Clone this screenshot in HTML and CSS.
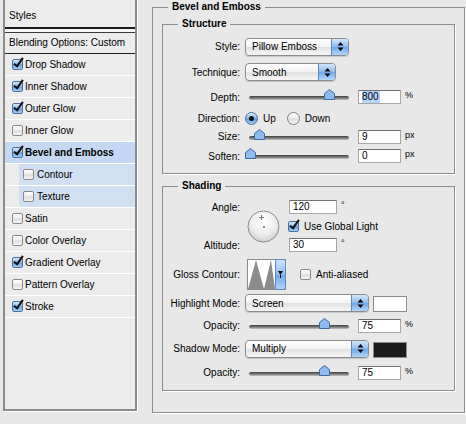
FILE: index.html
```html
<!DOCTYPE html>
<html lang="en">
<head>
    <meta charset="UTF-8">
    <title>Layer Style</title>
    <link rel="stylesheet" href="styles.css">
</head>
<body>
<div class="dialog">
    <div class="styles-list">
        <div class="list-head">Styles</div>
        <div class="list-blend">Blending Options: Custom</div>
        <div class="list-item"><span class="cb on"></span>Drop Shadow</div>
        <div class="list-item"><span class="cb on"></span>Inner Shadow</div>
        <div class="list-item"><span class="cb on"></span>Outer Glow</div>
        <div class="list-item"><span class="cb"></span>Inner Glow</div>
        <div class="list-item selected"><span class="cb on"></span><b>Bevel and Emboss</b></div>
        <div class="list-item sub"><span class="cb"></span>Contour</div>
        <div class="list-item sub"><span class="cb"></span>Texture</div>
        <div class="list-item"><span class="cb"></span>Satin</div>
        <div class="list-item"><span class="cb"></span>Color Overlay</div>
        <div class="list-item"><span class="cb on"></span>Gradient Overlay</div>
        <div class="list-item"><span class="cb"></span>Pattern Overlay</div>
        <div class="list-item"><span class="cb on"></span>Stroke</div>
    </div>

    <fieldset class="group outer">
        <legend>Bevel and Emboss</legend>

        <fieldset class="group inner structure">
            <legend>Structure</legend>
            <div class="form-grid structure-grid">
                <span class="label">Style:</span>
                <div class="control">
                    <div class="popup popup-style">
                        <span class="popup-text">Pillow Emboss</span>
                        <span class="popup-arrows"><svg width="7" height="11" viewBox="0 0 7 11"><path d="M3.5 1L6.5 4.5H0.5Z M0.5 6.5H6.5L3.5 10Z"/></svg></span>
                    </div>
                </div>

                <span class="label">Technique:</span>
                <div class="control">
                    <div class="popup popup-technique">
                        <span class="popup-text">Smooth</span>
                        <span class="popup-arrows"><svg width="7" height="11" viewBox="0 0 7 11"><path d="M3.5 1L6.5 4.5H0.5Z M0.5 6.5H6.5L3.5 10Z"/></svg></span>
                    </div>
                </div>

                <span class="label">Depth:</span>
                <div class="control">
                    <div class="slider"><svg class="thumb" style="left: 75px" width="11" height="11" viewBox="0 0 11 11"><path d="M5.5 0.5L10.5 4.5V10.5H0.5V4.5Z"/></svg></div>
                    <span class="field"><span class="field-sel">800</span></span>
                    <span class="unit">%</span>
                </div>

                <span class="label">Direction:</span>
                <div class="control">
                    <span class="radio on"></span><span class="radio-text">Up</span>
                    <span class="radio radio-down"></span><span class="radio-text">Down</span>
                </div>

                <span class="label">Size:</span>
                <div class="control">
                    <div class="slider"><svg class="thumb" style="left: 5px" width="11" height="11" viewBox="0 0 11 11"><path d="M5.5 0.5L10.5 4.5V10.5H0.5V4.5Z"/></svg></div>
                    <span class="field">9</span>
                    <span class="unit">px</span>
                </div>

                <span class="label">Soften:</span>
                <div class="control">
                    <div class="slider"><svg class="thumb" style="left: -4px" width="11" height="11" viewBox="0 0 11 11"><path d="M5.5 0.5L10.5 4.5V10.5H0.5V4.5Z"/></svg></div>
                    <span class="field">0</span>
                    <span class="unit">px</span>
                </div>
            </div>
        </fieldset>

        <fieldset class="group inner shading">
            <legend>Shading</legend>
            <div class="form-grid shading-grid">
                <span class="label">Angle:</span>
                <div class="light">
                    <svg class="dial" width="33" height="33" viewBox="0 0 33 33">
                        <defs>
                            <radialGradient id="dialFill" cx="0.5" cy="0.35" r="0.65">
                                <stop offset="0" stop-color="#ffffff"/>
                                <stop offset="0.6" stop-color="#eeeeee"/>
                                <stop offset="1" stop-color="#cfcfcf"/>
                            </radialGradient>
                        </defs>
                        <circle cx="16.5" cy="16.5" r="15.5" fill="url(#dialFill)" stroke="#8a8a8a"/>
                        <path d="M12 7.5H17 M14.5 5V10" stroke="#777" stroke-width="1"/>
                        <rect x="16" y="16" width="2" height="2" fill="#8a8a8a"/>
                    </svg>
                    <div class="light-fields">
                        <div class="light-row"><span class="field field-wide">120</span><span class="unit">°</span></div>
                        <div class="light-row"><span class="cb on"></span><span class="cb-text">Use Global Light</span></div>
                        <div class="light-row"><span class="field field-wide">30</span><span class="unit">°</span></div>
                    </div>
                </div>
                <span></span>
                <span class="label">Altitude:</span>

                <span class="label">Gloss Contour:</span>
                <div class="control">
                    <svg class="contour" width="39" height="31" viewBox="0 0 39 31">
                        <defs>
                            <linearGradient id="contourBlue" x1="0" y1="0" x2="0" y2="1">
                                <stop offset="0" stop-color="#d2e6fb"/>
                                <stop offset="0.5" stop-color="#8fbdf0"/>
                                <stop offset="0.51" stop-color="#6ea9ea"/>
                                <stop offset="1" stop-color="#b3d6fb"/>
                            </linearGradient>
                        </defs>
                        <rect x="0.5" y="0.5" width="38" height="30" fill="#fff" stroke="#8a8a8a"/>
                        <path d="M1 30L9 1L17 30L24 1L28 30Z" fill="#8c8c8c"/>
                        <rect x="28.5" y="0.5" width="10" height="30" rx="2" fill="url(#contourBlue)" stroke="#5f86c0"/>
                        <path d="M31 12H36L33.5 16Z M33 16H34V19H33Z" fill="#000"/>
                    </svg>
                    <span class="cb cb-anti"></span><span class="cb-text">Anti-aliased</span>
                </div>

                <span class="label">Highlight Mode:</span>
                <div class="control">
                    <div class="popup popup-mode">
                        <span class="popup-text">Screen</span>
                        <span class="popup-arrows"><svg width="7" height="11" viewBox="0 0 7 11"><path d="M3.5 1L6.5 4.5H0.5Z M0.5 6.5H6.5L3.5 10Z"/></svg></span>
                    </div>
                    <span class="swatch"></span>
                </div>

                <span class="label">Opacity:</span>
                <div class="control">
                    <div class="slider"><svg class="thumb" style="left: 70px" width="11" height="11" viewBox="0 0 11 11"><path d="M5.5 0.5L10.5 4.5V10.5H0.5V4.5Z"/></svg></div>
                    <span class="field">75</span>
                    <span class="unit">%</span>
                </div>

                <span class="label">Shadow Mode:</span>
                <div class="control">
                    <div class="popup popup-mode">
                        <span class="popup-text">Multiply</span>
                        <span class="popup-arrows"><svg width="7" height="11" viewBox="0 0 7 11"><path d="M3.5 1L6.5 4.5H0.5Z M0.5 6.5H6.5L3.5 10Z"/></svg></span>
                    </div>
                    <span class="swatch swatch-dark"></span>
                </div>

                <span class="label">Opacity:</span>
                <div class="control">
                    <div class="slider"><svg class="thumb" style="left: 70px" width="11" height="11" viewBox="0 0 11 11"><path d="M5.5 0.5L10.5 4.5V10.5H0.5V4.5Z"/></svg></div>
                    <span class="field">75</span>
                    <span class="unit">%</span>
                </div>
            </div>
        </fieldset>
    </fieldset>
</div>
</body>
</html>
```

FILE: styles.css
```css
body {
    margin: 0;
    background-color: #e8e8e8;
    font-family: "Liberation Sans", Arial, sans-serif;
    font-size: 10px;
    color: #000;
    overflow: hidden;
}
.dialog {
    display: flex;
    align-items: flex-start;
    width: 466px;
    height: 424px;
    overflow: hidden;
}

/* styles list on the left */
.styles-list {
    flex: none;
    width: 130px;
    height: 409px;
    margin-left: 3px;
    background-color: #ececec;
    border: 2px solid #8c8c8c;
    border-top: none;
    box-shadow: 1px 1px 0 #fff;
}
.list-head {
    height: 22px;
    padding: 5px 0 0 4px;
    line-height: 22px;
    border-bottom: 2px solid #1c1c1c;
    box-shadow: 0 3px 0 #f7f7f7;
}
.list-blend {
    margin-top: 3px;
    height: 20px;
    padding-left: 4px;
    line-height: 20px;
    border-top: 1px solid #3a3a3a;
    border-bottom: 1px solid #222;
}
.list-item {
    display: flex;
    align-items: center;
    height: 21px;
    padding-left: 7px;
    border-bottom: 1px solid #fff;
}
.list-item .cb {
    margin-right: 2px;
}
.list-item.selected {
    background-color: #c4d8f3;
}
.list-item.sub {
    padding-left: 18px;
    background: linear-gradient(to right, #ececec 14px, #d1dff3 14px);
}
.list-item.sub .cb {
    margin-right: 3px;
}

/* group boxes */
.group {
    box-sizing: border-box;
    margin: 0;
    padding: 0;
    min-width: 0;
    border: 1px solid #8e8e8e;
    box-shadow: 1px 1px 0 #fff;
}
.group legend {
    padding: 0 4px;
    line-height: 12px;
    font-weight: bold;
}
.outer {
    flex: none;
    width: 313px;
    margin: 1px 0 0 15px;
    padding-bottom: 21px;
}
.outer > legend {
    margin-left: 15px;
}
.inner {
    width: 293px;
    margin-left: 9px;
}
.inner > legend {
    margin-left: 15px;
}
.structure {
    margin-top: 5px;
    padding: 4px 0 7px;
}
.shading {
    margin-top: 6px;
    padding: 4px 0 5px;
}

.form-grid {
    display: grid;
    grid-template-columns: 77px 1fr;
    column-gap: 5px;
    align-items: center;
}
.structure-grid {
    grid-template-rows: 25px 26px 24px 18px 19px 20px;
}
.shading-grid {
    grid-template-rows: 22px 16px 22px 36px 22px 23px 23px 25px;
}
.label {
    text-align: right;
    white-space: nowrap;
}
.control {
    display: flex;
    align-items: center;
}

/* popup buttons */
.popup {
    box-sizing: border-box;
    display: flex;
    align-items: center;
    height: 18px;
    border: 1px solid #8b8b8b;
    border-radius: 4px;
    background: linear-gradient(#ffffff, #f3f3f3 48%, #e2e2e2 52%, #f6f6f6);
    box-shadow: 0 1px 1px rgba(0, 0, 0, 0.15);
    overflow: hidden;
}
.popup-style {
    width: 104px;
}
.popup-technique {
    width: 91px;
}
.popup-mode {
    width: 124px;
}
.popup-text {
    flex: 1;
    padding-left: 6px;
}
.popup-arrows {
    display: flex;
    align-items: center;
    justify-content: center;
    align-self: stretch;
    width: 16px;
    border-left: 1px solid #5f86c0;
    background: linear-gradient(#d2e6fb, #8fbdf0 48%, #6ea9ea 52%, #b3d6fb);
}

/* sliders and fields */
.slider {
    position: relative;
    width: 100px;
    height: 4px;
    margin: 2px 9px 0 4px;
    border-radius: 2px;
    background: linear-gradient(#3e3e3e, #858585 60%, #c4c4c4);
}
.thumb {
    position: absolute;
    top: -7px;
    fill: #8dbbef;
    stroke: #3b69a4;
}
.field {
    box-sizing: border-box;
    width: 43px;
    height: 14px;
    padding-left: 3px;
    line-height: 12px;
    background-color: #fff;
    border: 1px solid #a6a6a6;
    border-top-color: #6f6f6f;
}
.field-wide {
    width: 48px;
}
.field-sel {
    display: inline-block;
    padding-right: 1px;
    background-color: #b5d5fd;
}
.unit {
    margin: 0 0 4px 4px;
    font-size: 9px;
}

/* checkboxes and radios */
.cb {
    position: relative;
    flex: none;
    box-sizing: border-box;
    width: 11px;
    height: 11px;
    border: 1px solid #8a8a8a;
    border-radius: 2px;
    background: linear-gradient(#ffffff, #ececec 48%, #dcdcdc 52%, #f6f6f6);
}
.cb.on {
    border-color: #4d6f9f;
    background: linear-gradient(#d6e8fb, #8cbcf0 48%, #5d9ee6 52%, #a6d0f8);
}
.cb.on::after {
    content: "";
    position: absolute;
    left: 3px;
    top: -4px;
    width: 3px;
    height: 9px;
    border-right: 2px solid #111;
    border-bottom: 2px solid #111;
    transform: rotate(35deg);
}
.cb-text {
    margin-left: 5px;
}
.radio {
    position: relative;
    box-sizing: border-box;
    width: 13px;
    height: 13px;
    border: 1px solid #808080;
    border-radius: 50%;
    background: linear-gradient(#ffffff, #ececec 48%, #dcdcdc 52%, #f6f6f6);
}
.radio.on {
    border-color: #4d6f9f;
    background: linear-gradient(#d6e8fb, #8cbcf0 48%, #5d9ee6 52%, #a6d0f8);
}
.radio.on::after {
    content: "";
    position: absolute;
    left: 3px;
    top: 3px;
    width: 5px;
    height: 5px;
    border-radius: 50%;
    background-color: #111;
}
.radio-text {
    margin-left: 5px;
}
.radio-down {
    margin-left: 11px;
}

/* lighting block */
.light {
    grid-row: span 3;
    display: flex;
    align-items: center;
}
.dial {
    margin: 1px 9px 0 2px;
}
.light-fields {
    display: grid;
    grid-template-rows: 22px 16px 22px;
}
.light-row {
    display: flex;
    align-items: center;
}
.light-row .cb {
    margin-left: -1px;
}

.contour {
    margin-left: 2px;
}
.cb-anti {
    margin-left: 14px;
}
.swatch {
    box-sizing: border-box;
    width: 34px;
    height: 16px;
    margin: 2px 0 0 4px;
    background-color: #fff;
    border: 1px solid #8a8a8a;
}
.swatch-dark {
    background-color: #1b1b1b;
}
```
